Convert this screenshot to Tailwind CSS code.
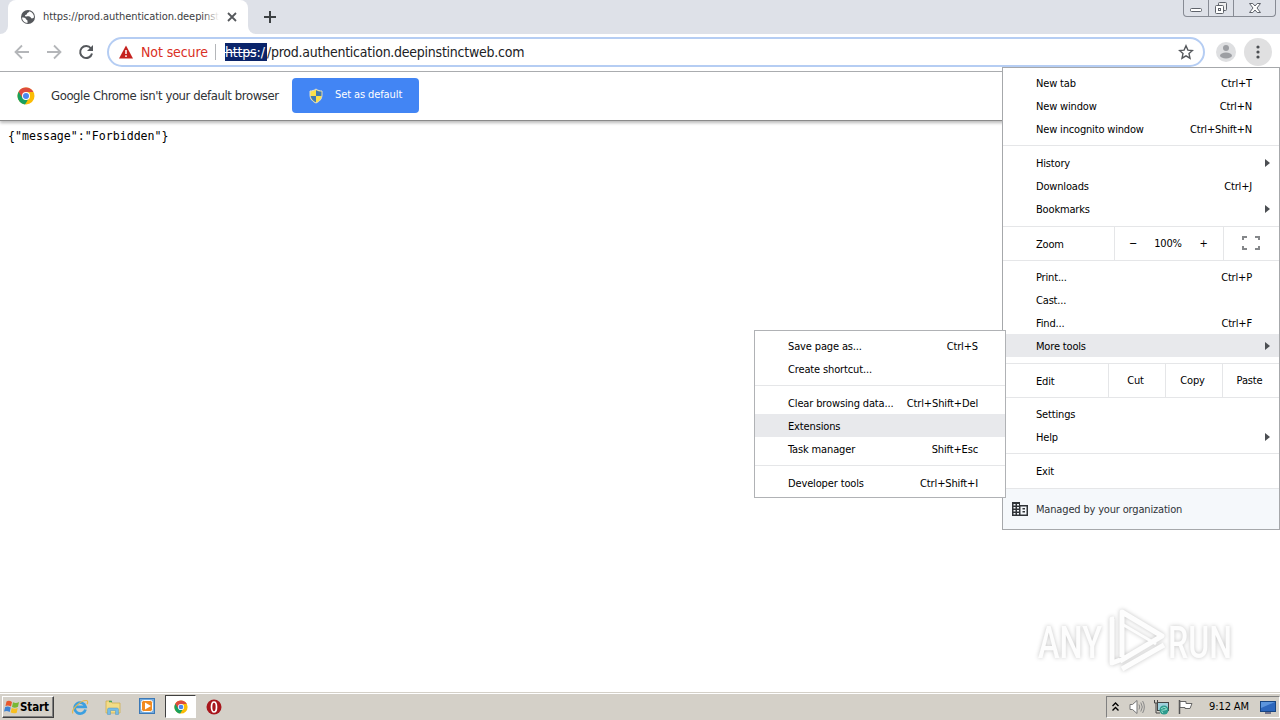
<!DOCTYPE html>
<html lang="en">
<head>
    <meta charset="UTF-8">
    <meta name="viewport" content="width=device-width, initial-scale=1.0">
    <title>prod.authentication.deepinstinctweb.com</title>
    <script src="https://cdn.jsdelivr.net/npm/@tailwindcss/browser@4"></script>
</head>
<body class="relative flex h-[720px] w-[1280px] flex-col overflow-hidden bg-white font-['DejaVu_Sans_Condensed','DejaVu_Sans',sans-serif] text-[11px] text-black">

    <!-- Tab strip -->
    <header class="flex h-[34px] shrink-0 justify-between bg-[#dee1e8]">
        <div class="flex">
            <div class="flex w-2 items-end bg-white"><div class="h-full w-2 rounded-br-lg bg-[#dee1e8]"></div></div>
            <div class="flex w-[240px] items-center rounded-t-lg bg-white pl-3">
                <svg class="size-4 shrink-0" viewBox="0 0 16 16">
                    <circle cx="8" cy="8" r="7" fill="#55585c"/>
                    <path d="M2 8.500c2 0 3.500.2 4 1.500s1.500.5 1.500 2v2C4.500 13.800 2.200 11.500 2 8.500ZM9.500 2.300c-.2 1.500-2.500 1-2.500 2.500S5 5.500 5 6.800s3 .2 4.500.7 1.500 2 2.500 2 1.200-1 2-1c.200-2.800-1.500-5.300-4.500-6.200Z" fill="#fff"/>
                </svg>
                <div class="relative ml-[7px] w-[176px] overflow-hidden whitespace-nowrap text-[#3c4043]">
                    <span class="tracking-[-0.08px]">https://prod.authentication.deepinst</span>
                    <div class="absolute inset-y-0 right-0 w-4 bg-linear-to-r from-white/0 to-white"></div>
                </div>
                <svg class="ml-[7px] size-3 shrink-0" viewBox="0 0 12 12"><path d="M2 2l8 8M10 2l-8 8" stroke="#55585c" stroke-width="1.800"/></svg>
            </div>
            <div class="w-2 bg-white"><div class="h-full w-2 rounded-bl-lg bg-[#dee1e8]"></div></div>
            <svg class="ml-[7px] mt-[10px] size-[14px]" viewBox="0 0 14 14"><path d="M7 1v12M1 7h12" stroke="#3c4043" stroke-width="2"/></svg>
        </div>
        <div class="mr-[4px] flex h-[17px] w-[93px] rounded-b-[4px] border border-t-0 border-[#878b94]">
            <div class="flex w-[25px] items-center justify-center border-r border-[#878b94]">
                <svg class="h-4 w-[14px]" viewBox="0 0 14 16"><rect x="1.500" y="8.500" width="11" height="3" rx="1" fill="#fff" stroke="#5f636b"/></svg>
            </div>
            <div class="flex w-[25px] items-center justify-center border-r border-[#878b94]">
                <svg class="h-4 w-[14px]" viewBox="0 0 14 16"><rect x="4.500" y="2.500" width="8" height="8" rx="1" fill="#eee" stroke="#5f636b"/><rect x="1.500" y="5.500" width="8" height="8" rx="1" fill="#fff" stroke="#5f636b"/><rect x="4.500" y="8.500" width="2" height="2" fill="none" stroke="#5f636b"/></svg>
            </div>
            <div class="flex grow items-center justify-center">
                <svg class="h-4 w-[14px]" viewBox="0 0 14 16"><path d="M1.500 3.500h3.300L7 6l2.200-2.500h3.300L9 8l3.500 4.500H9.200L7 10l-2.200 2.500H1.500L5 8Z" fill="#fff" stroke="#5f636b"/></svg>
            </div>
        </div>
    </header>

    <!-- Toolbar -->
    <div class="flex h-[38px] shrink-0 items-center border-b border-[#a9abae] bg-white pb-px pl-3">
        <svg class="size-5" viewBox="0 0 20 20"><path d="M17 10H4M10 3.500L3.500 10l6.500 6.500" fill="none" stroke="#b4b6b9" stroke-width="1.800"/></svg>
        <svg class="ml-[12px] size-5" viewBox="0 0 20 20"><path d="M3 10h13M10 3.500l6.500 6.500-6.500 6.500" fill="none" stroke="#b4b6b9" stroke-width="1.800"/></svg>
        <svg class="ml-[12px] size-5" viewBox="0 0 20 20"><path d="M15 6.500A6 6 0 1 0 16 11.500" fill="none" stroke="#55585c" stroke-width="2"/><path d="M17 3v6h-6Z" fill="#55585c"/></svg>
        <div class="ml-[11px] flex h-[30px] w-[1098px] items-center rounded-full border-2 border-[#b5cdf3] pl-[9px] pr-[9px] text-[14px] font-extralight">
            <svg class="size-4" viewBox="0 0 16 16"><path d="M8 1.500L15 14.500H1Z" fill="#c5221f"/><path d="M8 6v4M8 11.200v1.800" stroke="#fff" stroke-width="1.500"/></svg>
            <span class="ml-[7px] w-[68px] whitespace-nowrap tracking-[-0.1px] text-[#d93025]">Not secure</span>
            <div class="ml-[6px] h-4 w-px bg-[#b4b6b9]"></div>
            <div class="ml-[9px] flex items-center whitespace-nowrap text-[#202124]">
                <span class="flex h-[18px] w-[42px] items-center bg-[#0a246a] text-white"><s class="tracking-[-0.2px]">https</s>:/</span>
                <span class="tracking-[-0.25px]">/prod.authentication.deepinstinctweb.com</span>
            </div>
            <svg class="ml-auto size-4" viewBox="0 0 16 16"><path d="M8 1.800l1.900 4.300 4.600.4-3.500 3.100 1 4.600L8 11.800l-4 2.400 1-4.600L1.500 6.500l4.600-.4Z" fill="none" stroke="#55585c" stroke-width="1.400"/></svg>
        </div>
        <svg class="ml-[11px] size-5" viewBox="0 0 20 20"><circle cx="10" cy="10" r="10" fill="#dedfe1"/><circle cx="10" cy="6" r="3" fill="#9d9fa3"/><ellipse cx="10" cy="13.500" rx="6" ry="3" fill="#9d9fa3"/></svg>
        <svg class="ml-[8px] size-7" viewBox="0 0 28 28"><circle cx="14" cy="14" r="14" fill="#e0e0e1"/><g fill="#4c4f53"><circle cx="14" cy="9" r="1.600"/><circle cx="14" cy="14" r="1.600"/><circle cx="14" cy="19" r="1.600"/></g></svg>
    </div>

    <!-- Default browser bar -->
    <div class="flex h-[49px] shrink-0 items-center border-b border-[#8a8a8a] pb-px pl-[17px] shadow-[0_2px_3px_#bbbbbb]">
        <svg class="size-[18px]" viewBox="0 0 18 18">
            <circle cx="9" cy="9" r="8.500" fill="#fbbc05"/>
            <path d="M9 9L1.600 4.800A8.500 8.500 0 0 0 8 17.400L12 11Z" fill="#18a05e"/>
            <path d="M1.600 4.800A8.500 8.500 0 0 1 16.400 5H9L5.500 11Z" fill="#dd4b3e"/>
            <circle cx="9" cy="9" r="4" fill="#fff"/><circle cx="9" cy="9" r="3" fill="#4a88ee"/>
        </svg>
        <span class="ml-4 w-[229px] whitespace-nowrap text-[13px] font-extralight tracking-[-0.42px] text-[#303235]">Google Chrome isn't your default browser</span>
        <div class="ml-[12px] flex h-[35px] w-[127px] items-center rounded-[4px] bg-[#4285f4] pl-4 text-white">
            <svg class="size-4" viewBox="0 0 16 16">
                <path d="M8 1C6 2.500 4 3 2 3v4c0 4 2.500 6.500 6 8 3.500-1.500 6-4 6-8V3c-2 0-4-.5-6-2Z" fill="#fbe04b" stroke="#d9dcd4"/>
                <path d="M8 2v6h5.400c.1-1 .1-2.500.1-4.500C11.500 3.500 9.500 3 8 2ZM8 8v6.300C5.200 13 3.100 11 2.700 8Z" fill="#3f79b4"/>
            </svg>
            <span class="ml-[11px] tracking-[-0.1px]">Set as default</span>
        </div>
    </div>

    <!-- Page -->
    <main class="grow pl-2 pt-[8px]">
        <pre class="font-['DejaVu_Sans_Mono',monospace] text-[11.600px] leading-[14px]">{"message":"Forbidden"}</pre>
    </main>

    <!-- Taskbar -->
    <footer class="flex h-[28px] shrink-0 items-center border-t border-[#d4d0c8] bg-[#d4d0c8] pl-[2px] shadow-[inset_0_1px_0_#ffffff]">
        <div class="flex h-[22px] w-[52px] items-center border border-b-[#404040] border-l-white border-r-[#404040] border-t-white pl-px shadow-[inset_-1px_-1px_0_#808080]">
            <svg class="size-4" viewBox="0 0 16 16">
                <path d="M2.500 2.500Q5 1 8 3L7 7.500Q4 6 1.500 7Z" fill="#e8582c"/><path d="M9 3.300Q12 5 15 3l-1 4.700Q11 9.500 8 8Z" fill="#78b833"/>
                <path d="M1.200 8Q4 6.800 6.700 8.500L5.700 13Q3 11.500 0 12.500Z" fill="#3e83d3"/><path d="M7.700 9Q11 10.500 13.700 9l-1 4.700Q10 15 6.700 13.500Z" fill="#f8bf20"/>
            </svg>
            <span class="pt-[2px] text-[11.500px] font-bold tracking-[-0.1px]">Start</span>
        </div>
        <svg class="ml-[17px] size-[18px]" viewBox="0 0 18 18"><path d="M14.500 11.500A5.500 5.500 0 1 1 14.500 8.800H5" fill="none" stroke="#3b9fe0" stroke-width="2.800"/><path d="M2 15.500C-1 13 9 2 15.500 2.500c2 .3 1 3 .5 3.800" fill="none" stroke="#e5b84a" stroke-width="1.200"/></svg>
        <svg class="ml-[15px] size-[18px]" viewBox="0 0 18 18"><path d="M2 3h5l1 2h8v10H2Z" fill="#f3dc86" stroke="#cfae4e" stroke-width=".8"/><path d="M5 3.500h3" stroke="#4ca65a" stroke-width="1.500"/><path d="M3.500 16.500v-5q0-1.500 1.500-1.500h8q1.500 0 1.500 1.500v5h-3v-4h-5v4Z" fill="#75bce6" stroke="#5494be" stroke-width=".5"/></svg>
        <svg class="ml-[17px] size-[17px]" viewBox="0 0 17 17"><rect x=".5" y=".5" width="15" height="15" fill="#74abdd" stroke="#3b78b6"/><rect x="2.500" y="2.500" width="11" height="11" rx="2" fill="#f18b20" stroke="#fff"/><path d="M6 4.500l6 3.500-6 3.500Z" fill="#fff"/></svg>
        <div class="ml-[9px] flex h-[23px] w-[31px] items-center justify-center border border-b-white border-l-[#404040] border-r-white border-t-[#404040] bg-white">
            <svg class="size-[14px]" viewBox="0 0 18 18">
                <circle cx="9" cy="9" r="8.500" fill="#fbbc05"/>
                <path d="M9 9L1.600 4.800A8.500 8.500 0 0 0 8 17.400L12 11Z" fill="#18a05e"/>
                <path d="M1.600 4.800A8.500 8.500 0 0 1 16.400 5H9L5.500 11Z" fill="#dd4b3e"/>
                <circle cx="9" cy="9" r="4" fill="#fff"/><circle cx="9" cy="9" r="3" fill="#4a88ee"/>
            </svg>
        </div>
        <svg class="ml-[10px] size-4" viewBox="0 0 16 16"><circle cx="8" cy="8" r="7.500" fill="#a8161c"/><ellipse cx="8" cy="8" rx="2.500" ry="5" fill="#a8161c" stroke="#fff" stroke-width="1.700"/></svg>

        <div class="ml-auto flex h-[22px] w-[174px] items-center border border-b-white border-l-[#808080] border-r-white border-t-[#808080] pl-[5px]">
            <svg class="h-[10px] w-[7px]" viewBox="0 0 7 10"><path d="M.5 4l3-3 3 3M.5 8.500l3-3 3 3" fill="none" stroke="#000" stroke-width="1.400"/></svg>
            <svg class="ml-[10px] size-4" viewBox="0 0 16 16"><path d="M1 5.500h2.500L8 1.500v13l-4.500-4H1Z" fill="#fff" stroke="#777"/><path d="M10 5.500q1.500 2.500 0 5M11.800 3.500q3 4.500 0 9M13.600 2q3.500 6 0 12" fill="none" stroke="#888"/></svg>
            <svg class="ml-[8px] size-4" viewBox="0 0 16 16"><rect x="4.500" y="3.500" width="11" height="8" fill="#9ed0dc" stroke="#444"/><path d="M1.500 1v3h3V1M3 4v10h4" fill="none" stroke="#444"/><circle cx="11" cy="11" r="4.500" fill="#2d9b8d"/><path d="M8 10q3-3 5-1t-2 2-1 3" fill="none" stroke="#9de1d0"/></svg>
            <svg class="ml-[8px] size-4" viewBox="0 0 16 16"><path d="M2.500 1v14" stroke="#555" stroke-width="1.500"/><path d="M3 2.500h6v2h6l-2 5H8v-1H3Z" fill="#fff" stroke="#666"/></svg>
            <span class="ml-[16px] w-[41px] whitespace-nowrap pt-px tracking-[-0.1px]">9:12 AM</span>
            <svg class="ml-[10px] size-4" viewBox="0 0 16 16"><rect x=".5" y="2.500" width="15" height="10" fill="#2d67bd" stroke="#174582"/><path d="M1 3h14L1 9Z" fill="#5c95dd"/><path d="M5 14h6" stroke="#557" stroke-width="1.500"/></svg>
        </div>
    </footer>

    <!-- Watermark -->
    <svg class="absolute left-[1030px] top-[602px] h-[76px] w-[220px] drop-shadow-[0_0_2px_#c4c4c4]" viewBox="0 0 220 76">
        <g fill="#fdfdfd" font-family="Roboto, sans-serif" font-size="44" font-weight="500">
            <text x="8" y="56" textLength="64" lengthAdjust="spacingAndGlyphs">ANY</text>
            <text x="138" y="56" textLength="64" lengthAdjust="spacingAndGlyphs">RUN</text>
        </g>
        <path d="M92 55V10l40 24-42 25M84 17h-2v44l8-3M92 67l42-24" fill="none" stroke="#fdfdfd" stroke-width="5" stroke-linejoin="round"/>
        <path d="M92 22l34 20" fill="none" stroke="#fdfdfd" stroke-width="3"/>
    </svg>

    <!-- Chrome menu -->
    <nav class="absolute left-[1002px] top-[67px] flex h-[463px] w-[278px] flex-col border border-[#a6a8ab] bg-white pt-[3px] leading-[23px] tracking-[-0.17px] [&_span]:translate-y-px [&_span]:whitespace-nowrap">
        <div class="flex h-[23px] justify-between pl-[33px] pr-[27px]"><span>New tab</span><span>Ctrl+T</span></div>
        <div class="flex h-[23px] justify-between pl-[33px] pr-[27px]"><span>New window</span><span>Ctrl+N</span></div>
        <div class="flex h-[23px] justify-between pl-[33px] pr-[27px]"><span>New incognito window</span><span>Ctrl+Shift+N</span></div>
        <div class="mb-[5px] mt-[5px] h-px shrink-0 bg-[#e5e6e8]"></div>
        <div class="flex h-[23px] items-center justify-between pl-[33px] pr-[9px]"><span>History</span><svg class="h-2 w-[5px]" viewBox="0 0 5 8"><path d="M0 0l5 4-5 4Z" fill="#4c4f53"/></svg></div>
        <div class="flex h-[23px] justify-between pl-[33px] pr-[27px]"><span>Downloads</span><span>Ctrl+J</span></div>
        <div class="flex h-[23px] items-center justify-between pl-[33px] pr-[9px]"><span>Bookmarks</span><svg class="h-2 w-[5px]" viewBox="0 0 5 8"><path d="M0 0l5 4-5 4Z" fill="#4c4f53"/></svg></div>
        <div class="mt-[6px] flex h-[35px] shrink-0 border-y border-[#e5e6e8] leading-[32px]">
            <span class="w-[111px] pl-[33px] leading-[34px]">Zoom</span>
            <div class="flex w-[110px] border-x border-[#e5e6e8]"><span class="w-9 text-center">−</span><span class="w-[34px] text-center">100%</span><span class="w-[37px] text-center">+</span></div>
            <svg class="ml-[18px] mt-[9px] h-[14px] w-[18px]" viewBox="0 0 18 14"><path d="M1 4V1h4M13 1h4v3M17 10v3h-4M5 13H1v-3" fill="none" stroke="#85878a" stroke-width="2"/></svg>
        </div>
        <div class="mt-[4px] flex h-[23px] justify-between pl-[33px] pr-[27px]"><span>Print...</span><span>Ctrl+P</span></div>
        <div class="flex h-[23px] pl-[33px]"><span>Cast...</span></div>
        <div class="flex h-[23px] justify-between pl-[33px] pr-[27px]"><span>Find...</span><span>Ctrl+F</span></div>
        <div class="flex h-[23px] items-center justify-between bg-[#e8e9ec] pl-[33px] pr-[9px]"><span>More tools</span><svg class="h-2 w-[5px]" viewBox="0 0 5 8"><path d="M0 0l5 4-5 4Z" fill="#4c4f53"/></svg></div>
        <div class="mt-[6px] flex h-[35px] shrink-0 border-y border-[#e5e6e8] text-center leading-[34px]">
            <span class="w-[105px] pl-[33px] text-left">Edit</span>
            <div class="w-[57px] border-l border-[#e5e6e8] pr-[3px]">Cut</div>
            <div class="w-[57px] border-l border-[#e5e6e8] pr-[3px]">Copy</div>
            <div class="w-[57px] border-l border-[#e5e6e8] pr-[3px]">Paste</div>
        </div>
        <div class="mt-[4px] flex h-[23px] pl-[33px]"><span>Settings</span></div>
        <div class="flex h-[23px] items-center justify-between pl-[33px] pr-[9px]"><span>Help</span><svg class="h-2 w-[5px]" viewBox="0 0 5 8"><path d="M0 0l5 4-5 4Z" fill="#4c4f53"/></svg></div>
        <div class="mb-[5px] mt-[5px] h-px shrink-0 bg-[#e5e6e8]"></div>
        <div class="flex h-[23px] pl-[33px]"><span>Exit</span></div>
        <div class="mt-[6px] flex grow items-center border-t border-[#e5e6e8] bg-[#f5f8fb] pl-[9px]">
            <svg class="h-[14px] w-4" viewBox="0 0 16 14"><path d="M0 0h8v3h8v11H0Z" fill="#303438"/><path d="M1.500 2h2v1.500h-2zM5 2h2v1.500H5zM1.500 5h2v1.500h-2zM5 5h2v1.500H5zM1.500 8h2v1.500h-2zM5 8h2v1.500H5zM1.500 11h2v1.500h-2zM5 11h2v1.500H5zM8.500 4.500h6v8h-6z" fill="#f5f8fb"/><path d="M10.500 6h2.500v1.500h-2.500zM10.500 9h2.500v1.500h-2.500z" fill="#303438"/></svg>
            <p class="ml-2 whitespace-nowrap text-[#303438]">Managed by your organization</p>
        </div>
    </nav>

    <!-- More tools submenu -->
    <nav class="absolute left-[754px] top-[330px] flex h-[168px] w-[252px] flex-col border border-[#b0b2b5] bg-white pt-[3px] leading-[23px] tracking-[-0.14px] [&_span]:translate-y-px [&_span]:whitespace-nowrap">
        <div class="flex h-[23px] justify-between pl-[33px] pr-[27px]"><span>Save page as...</span><span>Ctrl+S</span></div>
        <div class="flex h-[23px] pl-[33px]"><span>Create shortcut...</span></div>
        <div class="mb-[5px] mt-[5px] h-px shrink-0 bg-[#e5e6e8]"></div>
        <div class="flex h-[23px] justify-between pl-[33px] pr-[27px]"><span>Clear browsing data...</span><span>Ctrl+Shift+Del</span></div>
        <div class="flex h-[23px] bg-[#e8e9ec] pl-[33px]"><span>Extensions</span></div>
        <div class="flex h-[23px] justify-between pl-[33px] pr-[27px]"><span>Task manager</span><span>Shift+Esc</span></div>
        <div class="mb-[5px] mt-[5px] h-px shrink-0 bg-[#e5e6e8]"></div>
        <div class="flex h-[23px] justify-between pl-[33px] pr-[27px]"><span>Developer tools</span><span>Ctrl+Shift+I</span></div>
    </nav>
</body>
</html>
